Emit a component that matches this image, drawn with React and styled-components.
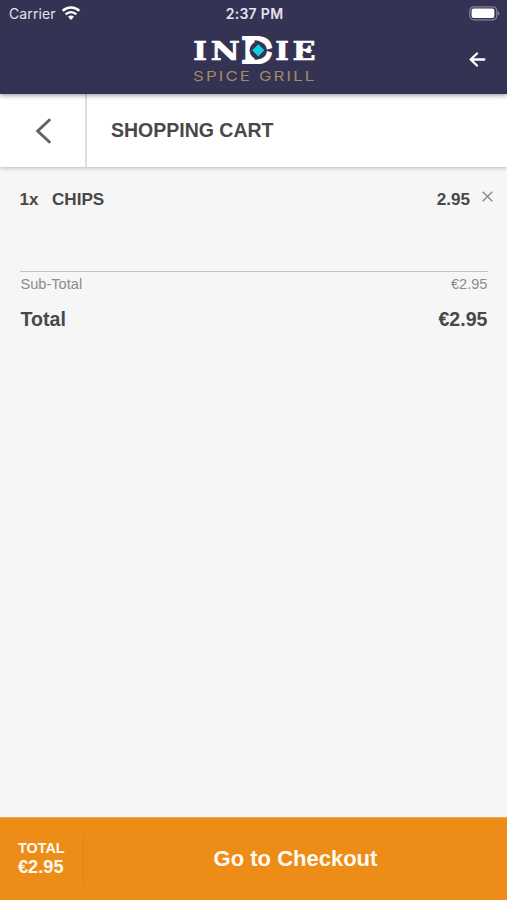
import React from "react";
import styled, { createGlobalStyle } from "styled-components";

const Global = createGlobalStyle`
  * { box-sizing: border-box; }
  body { margin: 0; background: #f6f6f6; }
`;

const Screen = styled.div`
  width: 100%;
  height: 100vh;
  display: flex;
  flex-direction: column;
  overflow: hidden;
  background: #f6f6f6;
  color: #484848;
  font-family: "Liberation Sans", Arial, sans-serif;
`;

const Header = styled.header`
  height: 94px;
  flex: none;
  background: #353353;
  z-index: 2;
  box-shadow: 0 1px 5px rgba(0, 0, 0, 0.45);
`;

const StatusBar = styled.div`
  height: 28px;
  padding: 0 7px 0 9px;
  display: grid;
  grid-template-columns: 1fr auto 1fr;
  align-items: center;
  font-family: Inter, sans-serif;
  font-size: 14px;
  line-height: 28px;
  color: #e4e3ed;
`;

const Carrier = styled.div`
  display: flex;
  align-items: center;
  gap: 5px;
  letter-spacing: 0.1px;
`;

const WifiSymbol = styled.svg`
  margin-top: -2px;
`;

const Clock = styled.div`
  font-size: 14px;
  font-weight: 600;
  letter-spacing: 0.3px;
`;

const Battery = styled.svg`
  justify-self: end;
  margin-top: -1px;
`;

const Brand = styled.div`
  height: 66px;
  display: grid;
  grid-template-columns: 1fr 130px 1fr;
`;

const Logo = styled.svg`
  grid-column: 2;
  display: block;
`;

const HeaderBack = styled.button`
  justify-self: end;
  align-self: start;
  margin: 22px 21px 0 0;
  padding: 0;
  border: 0;
  background: none;
  display: flex;
`;

const TitleBar = styled.div`
  height: 73px;
  flex: none;
  display: flex;
  background: #fff;
  z-index: 1;
  box-shadow: 0 1px 4px rgba(0, 0, 0, 0.26);
`;

const BackCell = styled.button`
  width: 87px;
  padding: 0;
  border: 0;
  border-right: 2px solid #dedede;
  background: none;
  display: flex;
  align-items: center;
  justify-content: center;
`;

const Title = styled.h1`
  margin: 0;
  padding-left: 24px;
  font-size: 19.5px;
  line-height: 72px;
  font-weight: 700;
`;

const Cart = styled.main`
  flex: 1;
`;

const Item = styled.div`
  height: 104px;
  padding: 23px 14px 0 19.5px;
  display: flex;
  font-size: 17.1px;
  line-height: 20px;
  font-weight: 700;
`;

const Quantity = styled.span`
  width: 32.5px;
`;

const Name = styled.span`
  flex: 1;
`;

const Remove = styled.button`
  margin: 1px 0 0 12px;
  padding: 0;
  border: 0;
  background: none;
  height: 12px;
  display: flex;
`;

const Summary = styled.div`
  margin: 0 19px 0 20px;
  border-top: 1px solid #c2c2c2;
`;

const SummaryRow = styled.div`
  display: flex;
  justify-content: space-between;
  padding: 0 0.5px;
  font-size: ${(p) => (p.$strong ? "19.6px" : "14.6px")};
  font-weight: ${(p) => (p.$strong ? 700 : 400)};
  color: ${(p) => (p.$strong ? "#484848" : "#8c8c8c")};
  line-height: ${(p) => (p.$strong ? "44px" : "25px")};
`;

const Footer = styled.footer`
  height: 83px;
  flex: none;
  display: flex;
  align-items: center;
  background: #ee8c18;
  border-top: 1px solid #f1a64e;
  color: #fffaf0;
  font-weight: 700;
`;

const FooterTotal = styled.div`
  width: 84px;
  height: 49px;
  padding: 4px 0 0 18px;
  border-right: 1px solid #df8116;
`;

const FooterLabel = styled.div`
  font-size: 14.4px;
  line-height: 18px;
`;

const FooterAmount = styled.div`
  font-size: 18.2px;
  line-height: 20px;
`;

const Checkout = styled.button`
  flex: 1;
  height: 100%;
  padding: 0;
  border: 0;
  background: none;
  color: inherit;
  font: 700 22px "Liberation Sans", Arial, sans-serif;
`;

const WifiIcon = () => (
  <WifiSymbol width="20" height="15" viewBox="0 0 20 15" fill="none" stroke="#fff">
    <path d="M1.7 4.8a12 12 0 0 1 16.6 0" strokeWidth="2.5" />
    <path d="M4.7 8.4a7.4 7.4 0 0 1 10.6 0" strokeWidth="2.3" />
    <path d="M7 10.8a4.2 4.2 0 0 1 6 0L10 14Z" fill="#fff" stroke="none" />
  </WifiSymbol>
);

const logoFont = {
  fontFamily: '"DejaVu Serif", serif',
  fontWeight: 700,
  lengthAdjust: "spacingAndGlyphs",
  fill: "#fff",
  stroke: "#fff",
  strokeWidth: 0.7,
};

const BrandLogo = () => (
  <Logo width="130" height="66" viewBox="189 28 130 66">
    <text x="193.2" y="60" fontSize="25.5" textLength="13.6" {...logoFont}>I</text>
    <text x="210.8" y="60" fontSize="25.5" textLength="29" {...logoFont}>N</text>
    <text x="241.6" y="63.3" fontSize="35.5" textLength="31" {...logoFont} strokeWidth="2.2">D</text>
    <text x="275.2" y="60" fontSize="25.5" textLength="13.6" {...logoFont}>I</text>
    <text x="292.5" y="60" fontSize="25.5" textLength="23" {...logoFont}>E</text>
    {/* leaf-shaped cut across the N, and pointed arms on the E */}
    <path d="M217.5 53.5q5.5 0 8 6.2M225 43q2 5.5 8 7" fill="none" stroke="#353353" strokeWidth="1" />
    <path d="M302.5 45.5l3.2 3.2M302.5 55.5l3.2-3.2M316 47l-6 3.5 6 3.5" fill="none" stroke="#353353" strokeWidth="1.2" />
    <path d="M303.5 50.5l4.5-2.7 4.5 2.7-4.5 2.7z" fill="#fff" />
    <circle cx="258.3" cy="50.3" r="8.7" fill="#353353" />
    <path d="M264.5 50.3l9-2.6v5.2z" fill="#353353" />
    <path d="M258.3 44.2l6.1 6.1-6.1 6.1-6.1-6.1z" fill="#12d1dc" />
    <text
      x="193" y="81.2" fontSize="13.4" textLength="123.5" letterSpacing="1.7"
      lengthAdjust="spacingAndGlyphs" fontFamily="Inter, sans-serif"
      fontWeight="400" fill="#a18c67"
    >SPICE GRILL</text>
  </Logo>
);

export default function App() {
  return (
    <Screen>
      <Global />
      <Header>
        <StatusBar>
          <Carrier>Carrier <WifiIcon /></Carrier>
          <Clock>2:37 PM</Clock>
          <Battery width="31" height="15" viewBox="0 0 31 15">
            <rect x="0.8" y="0.8" width="27" height="13" rx="4" fill="none" stroke="#85839a" strokeWidth="1.2" />
            <rect x="2.6" y="2.6" width="22.8" height="9.4" rx="2" fill="#fff" />
            <path d="M28.6 5c2.4.8 2.4 3.8 0 4.6z" fill="#85839a" />
          </Battery>
        </StatusBar>
        <Brand>
          <BrandLogo />
          <HeaderBack aria-label="Back">
            <svg width="18" height="18" viewBox="0 0 18 18" fill="none" stroke="#fff" strokeWidth="2.3" strokeLinecap="round" strokeLinejoin="round">
              <path d="M16.3 9.5H3M9 3.5L2.6 9.5 9 15.5" />
            </svg>
          </HeaderBack>
        </Brand>
      </Header>
      <TitleBar>
        <BackCell aria-label="Back">
          <svg width="18" height="26" viewBox="0 0 18 26" fill="none" stroke="#626262" strokeWidth="2.9">
            <path d="M16.2 1.2L3.7 13 16.2 24.8" />
          </svg>
        </BackCell>
        <Title>SHOPPING CART</Title>
      </TitleBar>
      <Cart>
        <Item>
          <Quantity>1x</Quantity>
          <Name>CHIPS</Name>
          <span>2.95</span>
          <Remove aria-label="Remove">
            <svg width="11" height="12" viewBox="0 0 11 12" stroke="#858585" strokeWidth="1.3">
              <path d="M.7 .7l9.6 9.6M10.3 .7L.7 10.3" />
            </svg>
          </Remove>
        </Item>
        <Summary>
          <SummaryRow><span>Sub-Total</span><span>€2.95</span></SummaryRow>
          <SummaryRow $strong><span>Total</span><span>€2.95</span></SummaryRow>
        </Summary>
      </Cart>
      <Footer>
        <FooterTotal>
          <FooterLabel>TOTAL</FooterLabel>
          <FooterAmount>€2.95</FooterAmount>
        </FooterTotal>
        <Checkout>Go to Checkout</Checkout>
      </Footer>
    </Screen>
  );
}
